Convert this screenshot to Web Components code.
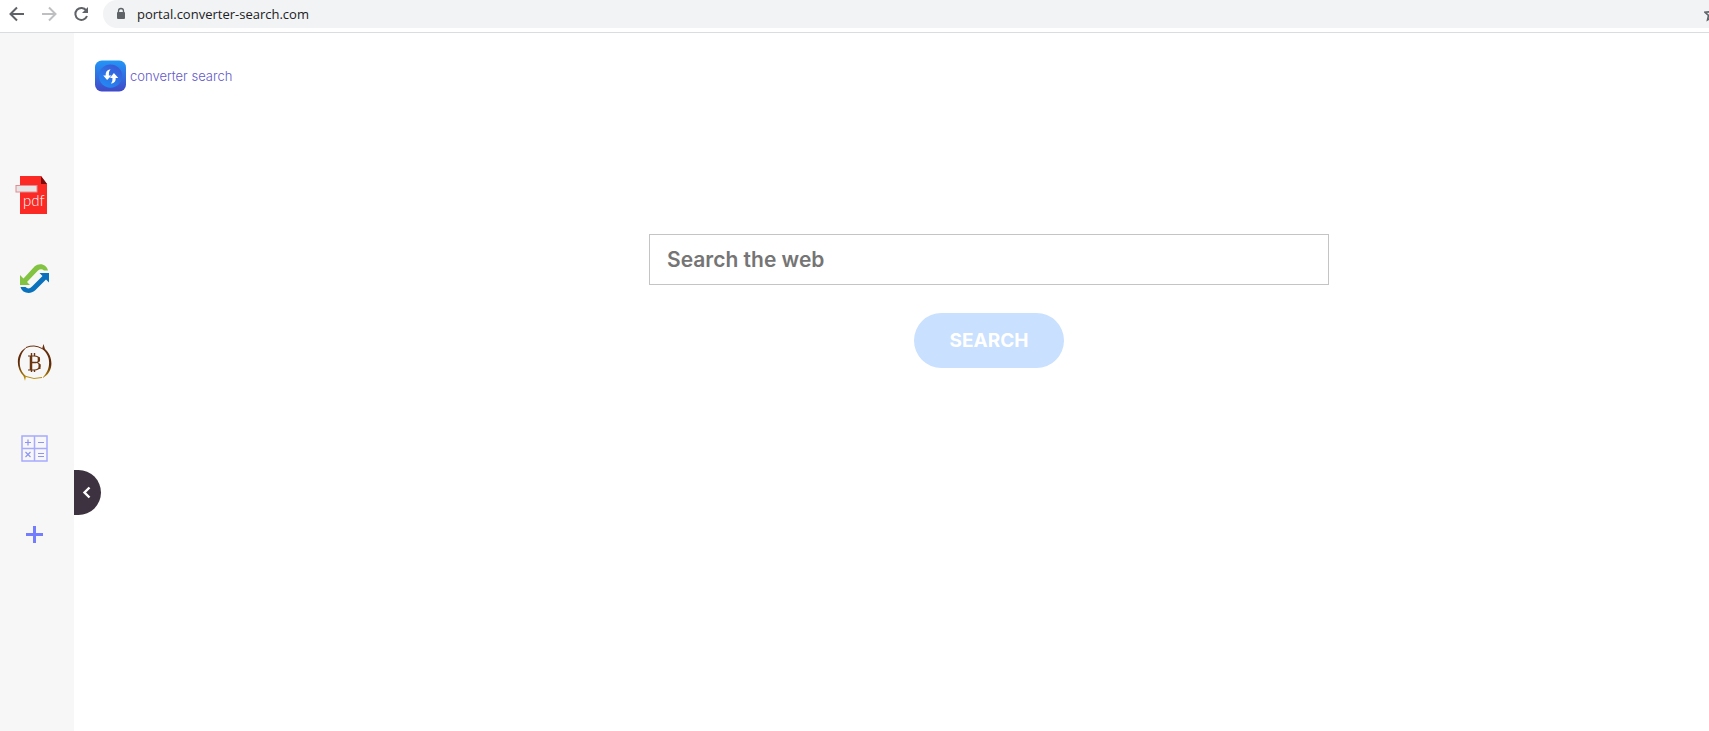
<!DOCTYPE html>
<html lang="en">
<head>
<meta charset="utf-8">
<title>Converter Search</title>
<style>
body{
    margin: 0;
    min-height: 100vh;
    display: flex;
    flex-direction: column;
    background-color: white;
    font-family: Inter, "Open Sans", sans-serif;
}
.page{
    flex: 1;
    display: flex;
}
</style>
</head>
<body>

<browser-bar>portal.converter-search.com</browser-bar>
<div class="page">
    <side-bar></side-bar>
    <search-page><brand-logo slot="logo">converter search</brand-logo><search-form label="Search the web">SEARCH</search-form></search-page>
</div>

<script>
function define(name, html){
    const template = document.createElement('template');
    template.innerHTML = html;
    window.customElements.define(name, class extends HTMLElement {
        constructor() {
            super();
            this.attachShadow({mode: 'open'});
            this.shadowRoot.appendChild(template.content.cloneNode(true));
        }
        connectedCallback(){
            const input = this.shadowRoot.querySelector('input');
            if (input) {
                input.placeholder = this.getAttribute('label');
                input.setAttribute('aria-label', this.getAttribute('label'));
            }
        }
    });
}

define('browser-bar', `
<style>
:host{
    display: flex;
    align-items: flex-start;
    box-sizing: border-box;
    height: 33px;
    padding-left: 7px;
    border-bottom: 1px solid #dadce0;
    overflow: hidden;
}
button{
    width: 20px;
    height: 28px;
    padding: 0;
    margin-right: 12px;
    border: 0;
    background: none;
}
svg{display: block}
.address{
    flex: 1;
    display: flex;
    align-items: center;
    height: 28px;
    padding-left: 13px;
    border-radius: 14px 0 0 14px;
    background-color: #f1f3f4;
    color: #202124;
    font: 13px/28px "Open Sans", "Noto Sans", sans-serif;
}
.url{
    flex: 1;
    margin-left: 11px;
}
</style>
<button aria-label="Back"><svg width="20" height="28" viewBox="0 0 20 28" fill="none" stroke="#5f6368" stroke-width="2"><path d="M17 14H4M10 7.500L3.500 14L10 20.500"/></svg></button>
<button aria-label="Forward" disabled><svg width="20" height="28" viewBox="0 0 20 28" fill="none" stroke="#bdbfc1" stroke-width="2"><path d="M3 14H16M10 7.500L16.500 14L10 20.500"/></svg></button>
<button aria-label="Reload"><svg width="20" height="28" viewBox="0 0 20 28"><path d="M15.300 10.500A6 6 0 1 0 16 16" fill="none" stroke="#5f6368" stroke-width="2"/><path d="M17 7V13H11Z" fill="#5f6368"/></svg></button>
<div class="address">
    <svg width="10" height="28" viewBox="0 0 10 28"><path d="M2.500 13V11A2.500 2.500 0 0 1 7.500 11V13" fill="none" stroke="#5f6368" stroke-width="1.300"/><rect x="1" y="12" width="8" height="7" rx="1" fill="#5f6368"/></svg>
    <span class="url"><slot></slot></span>
    <svg width="5" height="28" viewBox="0 0 5 28"><path d="M13 12L9.500 11.500L8 7L6.300 11.700L1 12.300L4.500 15.500L3.500 20L8 17.500" fill="none" stroke="#5f6368" stroke-width="1.600"/></svg>
</div>
`);

define('side-bar', `
<style>
:host{
    flex: none;
    position: relative;
    box-sizing: border-box;
    width: 74px;
    padding: 143px 5px 0 0;
    background-color: #f7f7f7;
}
nav{
    display: flex;
    flex-direction: column;
    align-items: center;
    gap: 50px;
}
svg{display: block}
/* half-round tab that hangs over the page */
.toggle{
    position: absolute;
    left: 100%;
    top: 437px;
    width: 27px;
    height: 45px;
    padding: 0;
    border: 0;
    border-radius: 0 23px 23px 0;
    background-color: #3d3340;
}
</style>
<nav>
<a href="#pdf" aria-label="PDF"><svg width="39" height="38" viewBox="0 0 39 38">
    <path d="M5 0H26L32 8V38H5Z" fill="#fb2a24"/>
    <path d="M26 0L32 8H26Z" fill="#7c0b0b"/>
    <rect x="1" y="9.500" width="21" height="6.500" fill="#e6e6e6" stroke="#e58a90" stroke-width="1"/>
    <text x="8" y="30" font-family="Lato" font-size="15" font-weight="300" fill="#fff">pdf</text>
</svg></a>
<a href="#convert" aria-label="Convert"><svg width="31" height="30" viewBox="0 0 31 30">
    <path d="M1 11V21H11L8 18L19 6.500Q22 4 25 6.500H29C28 1 21 -2 15.500 2.500L4.500 14.500Z" fill="#82c341"/>
    <path d="M30 9H20.500L23.500 12L13 22.500Q9.500 26 6.500 23H1.500C3 29 11 31 16 26.500L27 15.500L30 18.500Z" fill="#0a72bd"/>
</svg></a>
<a href="#crypto" aria-label="Crypto"><svg width="37" height="37" viewBox="0 0 37 37">
    <defs><linearGradient id="gold" x1="0" y1="0" x2="0" y2="37" gradientUnits="userSpaceOnUse"><stop offset="0" stop-color="#6b3010"/><stop offset=".55" stop-color="#5c2906"/><stop offset=".85" stop-color="#a57708"/><stop offset="1" stop-color="#d5ac20"/></linearGradient></defs>
    <path d="M26 5L27.500 0L29 5C38 13 38 29 26 34C35 26 36 12 26 5Z" fill="url(#gold)"/>
    <path d="M10 32L9 37L7.500 32C-1 23 0 8 11 3C2 11 1 25 10 32Z" fill="url(#gold)"/>
    <path d="M10 3.500Q18 0 26 4.500M10 32.500Q18 36 26 33.500" fill="none" stroke="url(#gold)" stroke-width="1"/>
    <path d="M12 12H18C25 12 25 18 20 18.500C26 19 25 26 18 26H12" fill="none" stroke="#6b360f" stroke-width="1.200"/>
    <path d="M15 12V26" fill="none" stroke="#6b360f" stroke-width="2.500"/>
    <path d="M22.700 13V17.500M23.500 20V25" fill="none" stroke="#6b360f" stroke-width="2"/>
    <path d="M15 18.500H20M15.500 9V12M18.500 9V12M15.500 26V28M18.500 26V28" fill="none" stroke="#6b360f" stroke-width="1.400"/>
</svg></a>
<a href="#calculator" aria-label="Calculator"><svg width="33" height="35" viewBox="0 0 33 35" fill="none" stroke="#a6abff" stroke-width="1.500">
    <path d="M4 5H29V30H4ZM16.500 5V30M4 17.500H29"/>
    <path d="M7 11.500H13M10 8.500V14.500M20 11.500H26M7.500 21L12.500 26M12.500 21L7.500 26M20 22.500H26M20 25.500H26" stroke="#8d94f4" stroke-width="1.200"/>
</svg></a>
<a href="#add" aria-label="Add"><svg width="39" height="37" viewBox="0 0 39 37"><path d="M11 18.500H28M19.500 10V27" stroke="#757dff" stroke-width="3"/></svg></a>
</nav>
<button class="toggle" aria-label="Collapse"><svg width="27" height="45" viewBox="0 0 27 45"><path d="M15.500 17.500L10.500 22.500L15.500 27.500" fill="none" stroke="#fff" stroke-width="2.400"/></svg></button>
`);

define('brand-logo', `
<style>
:host{
    display: flex;
    align-items: center;
    gap: 4px;
    color: #6259c9;
    font-size: 13px;
    font-weight: 300;
    line-height: 32px;
    white-space: nowrap;
}
</style>
<svg width="31" height="32" viewBox="0 0 32 32">
    <defs>
        <linearGradient id="tile" x1="0" y1="0" x2="0" y2="1"><stop offset="0" stop-color="#2196f8"/><stop offset="1" stop-color="#4149c8"/></linearGradient>
        <linearGradient id="disc" x1=".8" y1="0" x2=".2" y2="1"><stop offset="0" stop-color="#3b56d5"/><stop offset="1" stop-color="#218cf5"/></linearGradient>
    </defs>
    <rect width="32" height="32" rx="7" fill="url(#tile)"/>
    <circle cx="16" cy="16" r="12" fill="url(#disc)"/>
    <path d="M16 9Q10.500 10 11 15.500H8.500L12.500 20L17 15.500H14.300Q13.500 12 16 9ZM16.500 24Q22 22.500 21.300 18H24L19.500 13L15.500 18H18Q18.500 21 16.500 24Z" fill="#fff"/>
</svg>
<slot></slot>
`);

define('search-page', `
<style>
:host{
    flex: 1;
    display: grid;
    grid-template-columns: 174px 1fr;
    align-items: start;
    padding: 27px 0 0 21px;
}
main{padding: 174px 20px 0}
</style>
<slot name="logo"></slot>
<main><slot></slot></main>
`);

define('search-form', `
<style>
:host{display: block}
form{
    display: flex;
    flex-direction: column;
    align-items: center;
    gap: 28px;
}
input{
    box-sizing: border-box;
    width: 100%;
    max-width: 680px;
    height: 51px;
    padding: 0 17px;
    border: 1px solid #c4c4c4;
    border-radius: 0;
    background-color: white;
    font: 600 21px/24px Inter, sans-serif;
}
input::placeholder{color: #757575}
button{
    height: 55px;
    padding: 0 36px;
    border: 0;
    border-radius: 28px;
    background-color: #c9e0ff;
    color: white;
    font: 700 19px/24px Inter, sans-serif;
}
</style>
<form><input type="search"><button type="button"><slot></slot></button></form>
`);
</script>
</body>
</html>
